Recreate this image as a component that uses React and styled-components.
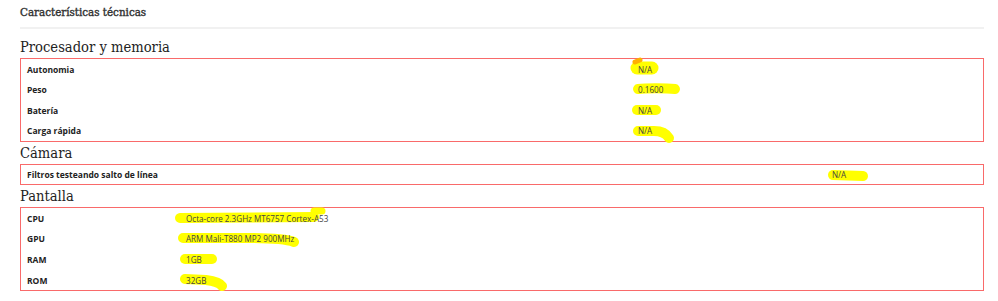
import React from "react";
import styled, { createGlobalStyle } from "styled-components";

const Global = createGlobalStyle`
  html, body { margin: 0; padding: 0; background: #fff; }
  body { font-family: "Open Sans", "Liberation Sans", sans-serif; color: #222; }
`;

const Page = styled.div`
  padding: 0 14px 0 20px;
`;

const Title = styled.h1`
  margin: 0;
  padding: 5px 0 8px;
  font-family: "DejaVu Serif", serif;
  font-stretch: condensed;
  font-weight: 400;
  font-size: 11.5px;
  line-height: 14px;
  color: #333;
  -webkit-text-stroke: 0.4px #333;
  border-bottom: 2px solid #f1f1f1;
`;

const SectionTitle = styled.h2`
  margin: ${(p) => (p.$first ? "7px" : "0")} 0 0;
  font-family: "DejaVu Serif", serif;
  font-stretch: condensed;
  font-weight: 400;
  font-size: 14.6px;
  line-height: 22px;
  color: #222;
`;

const Table = styled.table`
  width: 100%;
  border: 1px solid #f96a6a;
  border-collapse: collapse;
  table-layout: fixed;
`;

const Row = styled.tr`
  height: 20.7px;
`;

const Label = styled.td`
  width: ${(p) => p.$width}px;
  padding: 0 0 0 6px;
  font-size: 8.5px;
  font-weight: 700;
  color: #222;
  vertical-align: middle;
`;

const Value = styled.td`
  padding: 0;
  font-size: 8.1px;
  color: #444;
  vertical-align: middle;
`;

const Marked = styled.span`
  position: relative;
  display: inline-block;
`;

const Ink = styled.svg`
  position: absolute;
  left: 0;
  top: 50%;
  overflow: visible;
  pointer-events: none;
  z-index: 0;
`;

const InkText = styled.span`
  position: relative;
  z-index: 1;
`;

/* highlighter strokes, coordinates relative to the start of the text and row middle */
function Highlight({ strokes, children }) {
  return (
    <Marked>
      <Ink width="1" height="1">
        {strokes.map((s, i) => (
          <path
            key={i}
            d={s.d}
            stroke={s.color || "#ffff00"}
            strokeWidth={s.w}
            strokeLinecap="round"
            strokeLinejoin="round"
            fill="none"
          />
        ))}
      </Ink>
      <InkText>{children}</InkText>
    </Marked>
  );
}

const sections = [
  {
    title: "Procesador y memoria",
    labelWidth: 611,
    rows: [
      {
        label: "Autonomia",
        value: "N/A",
        strokes: [
          { d: "M-1,-1 L14,-1", w: 13 },
          { d: "M-3,-7 L2,-9", w: 5, color: "#ffb000" },
        ],
      },
      { label: "Peso", value: "0.1600", strokes: [{ d: "M0,-1 C8,-2 28,-2 37,-1", w: 10 }] },
      { label: "Batería", value: "N/A", strokes: [{ d: "M-1,0 L18,0", w: 10 }] },
      {
        label: "Carga rápida",
        value: "N/A",
        strokes: [{ d: "M0,0 L16,0 C22,0 28,2 31,7", w: 10 }],
      },
    ],
  },
  {
    title: "Cámara",
    labelWidth: 805,
    rows: [
      {
        label: "Filtros testeando salto de línea",
        value: "N/A",
        strokes: [{ d: "M1,0 L31,1", w: 10 }],
      },
    ],
  },
  {
    title: "Pantalla",
    labelWidth: 159,
    rows: [
      {
        label: "CPU",
        value: "Octa-core 2.3GHz MT6757 Cortex-A53",
        strokes: [
          { d: "M-6,-1 L128,-2", w: 10 },
          { d: "M128,-8 L136,-8", w: 7 },
        ],
      },
      {
        label: "GPU",
        value: "ARM Mali-T880 MP2 900MHz",
        strokes: [{ d: "M-3,-1 L60,-1 C80,-1 100,0 108,3", w: 10 }],
      },
      { label: "RAM", value: "1GB", strokes: [{ d: "M-1,-1 L26,-1", w: 10 }] },
      {
        label: "ROM",
        value: "32GB",
        strokes: [{ d: "M-1,-1 L20,0 C28,1 34,3 36,6", w: 10 }],
      },
    ],
  },
];

export default function App() {
  return (
    <>
      <Global />
      <Page>
        <Title>Características técnicas</Title>
        {sections.map((sec, i) => (
          <section key={sec.title}>
            <SectionTitle $first={i === 0}>{sec.title}</SectionTitle>
            <Table>
              <tbody>
                {sec.rows.map((r) => (
                  <Row key={r.label}>
                    <Label $width={sec.labelWidth}>{r.label}</Label>
                    <Value>
                      <Highlight strokes={r.strokes}>{r.value}</Highlight>
                    </Value>
                  </Row>
                ))}
              </tbody>
            </Table>
          </section>
        ))}
      </Page>
    </>
  );
}
